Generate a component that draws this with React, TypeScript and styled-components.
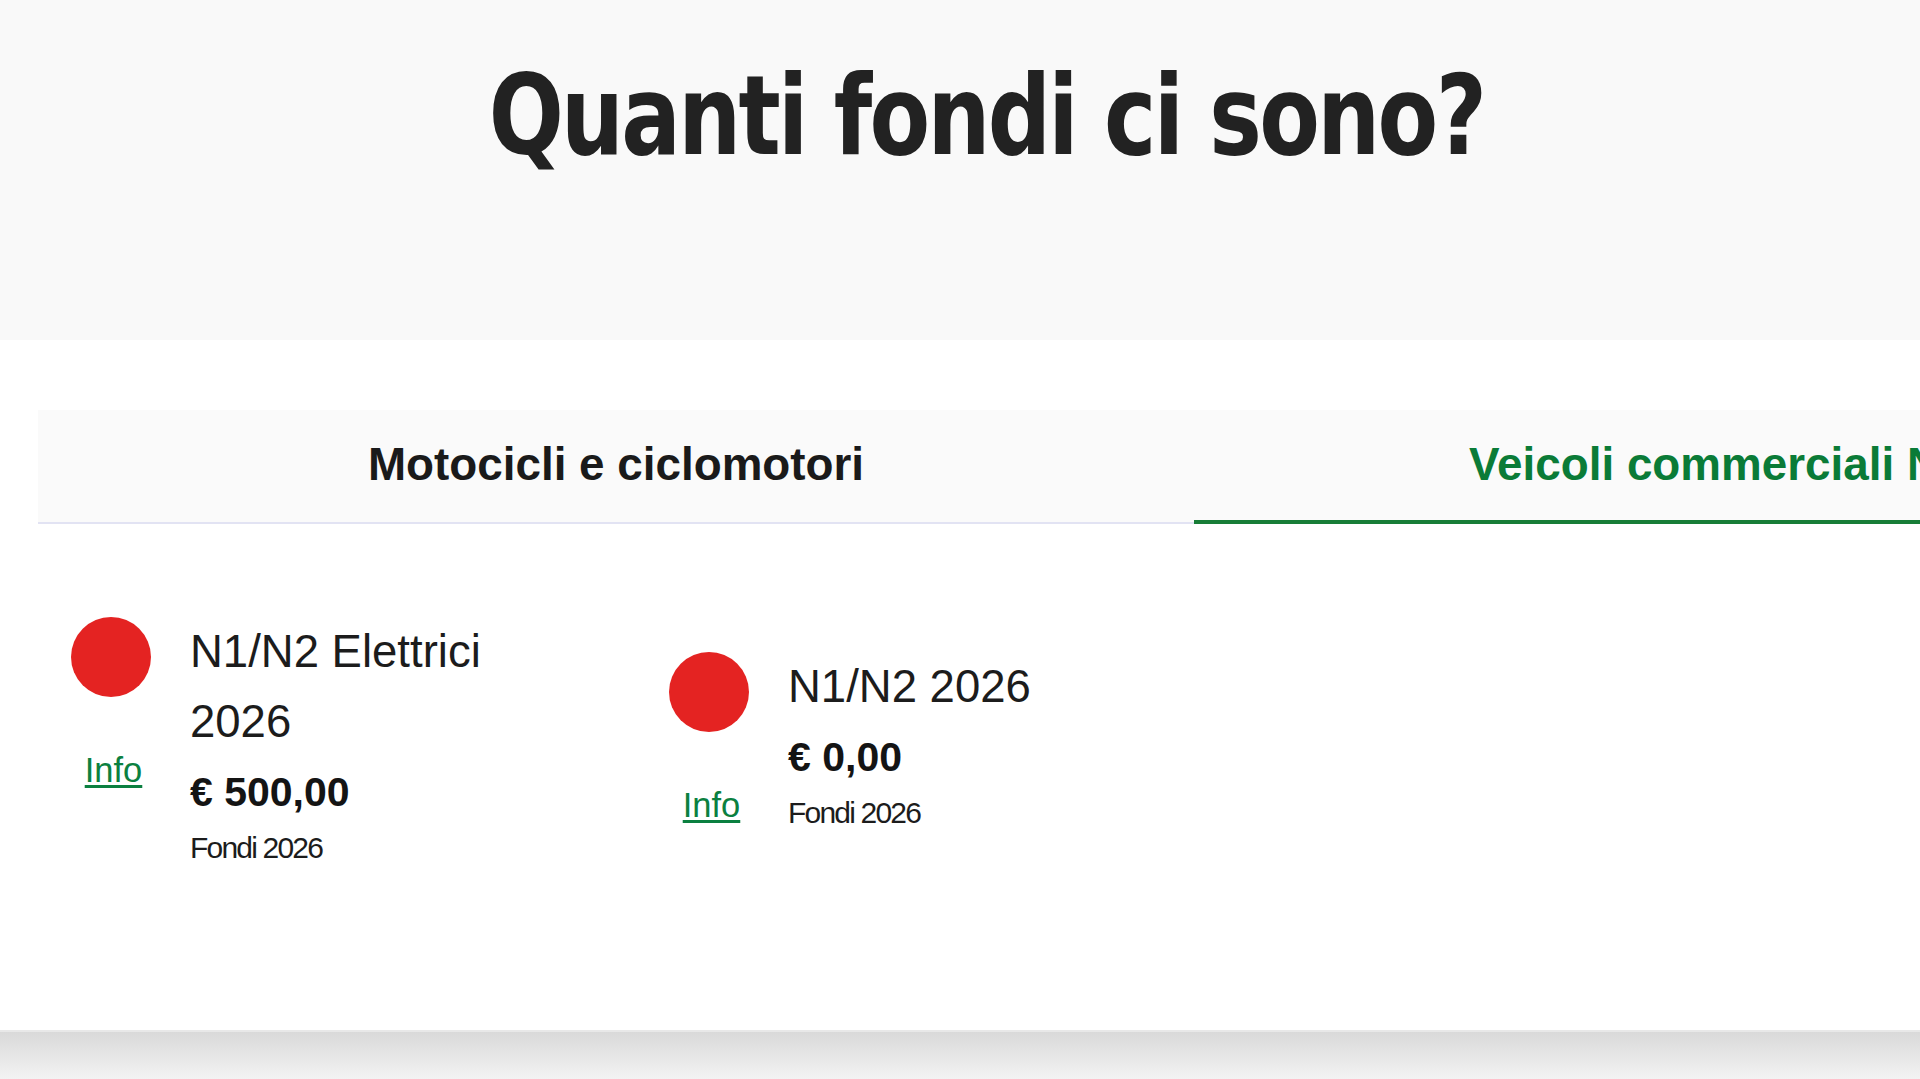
import styled, { createGlobalStyle } from "styled-components";

const GlobalStyle = createGlobalStyle`
    html, body {
        margin: 0;
        padding: 0;
        overflow-x: hidden;
        background-color: #f5f5f5;
        font-family: "Liberation Sans", Arial, sans-serif;
        color: #1c1c1c;
    }
`

const StyledHeader = styled.header`
    box-sizing: border-box;
    height: 340px;
    padding: 50px 0 0 52px;
    background-color: #f9f9f9;
    text-align: center;
`
const StyledTitle = styled.h1`
    margin: 0;
    font-family: "DejaVu Sans Condensed", "DejaVu Sans", sans-serif;
    font-weight: bold;
    font-size: 110px;
    line-height: 1.2;
    letter-spacing: -3px;
    color: #222222;

    span {
        display: inline-block;
        transform: scaleX(0.893);
    }
`
const StyledSection = styled.section`
    box-sizing: border-box;
    height: 690px;
    padding: 70px 0 0 38px;
    background-color: #ffffff;
    overflow: hidden;
`
const StyledFootShade = styled.div`
    height: 49px;
    border-top: 2px solid #e8e8e8;
    background: linear-gradient(#d9d9d9, #f4f4f4);
`
const StyledTabBar = styled.div`
    display: flex;
    height: 112px;
    background-color: #fafafa;
    border-bottom: 2px solid #e2e3f3;
`
const StyledTab = styled.div<{ $active?: boolean }>`
    box-sizing: border-box;
    flex: 0 0 1156px;
    height: 114px;
    margin-bottom: -2px;
    display: flex;
    align-items: center;
    justify-content: center;
    border-bottom: 4px solid ${(p) => (p.$active ? "#177d37" : "transparent")};
    font-size: 45.8px;
    font-weight: bold;
    white-space: nowrap;
    color: ${(p) => (p.$active ? "#0a7b37" : "#1a1a1a")};
    cursor: pointer;
`
const StyledFundRow = styled.div`
    display: flex;
    align-items: center;
    margin: 93px 0 0 33px;
`
const StyledFundItem = styled.div`
    flex: 0 0 598px;
    display: flex;
    align-items: flex-start;
    gap: 39px;
`
const StyledStatusColumn = styled.div`
    flex: 0 0 80px;
    display: flex;
    flex-direction: column;
    align-items: center;
`
const StyledDot = styled.span<{ $color: string }>`
    width: 80px;
    height: 80px;
    border-radius: 50%;
    background-color: ${(p) => p.$color};
`
const StyledInfoLink = styled.a`
    margin: 48px 0 0 5px;
    font-size: 34.5px;
    line-height: 50px;
    color: #0b8040;
    text-decoration: underline;
    text-underline-offset: 3px;
`
const StyledFundText = styled.div`
    width: 340px;
    display: flex;
    flex-direction: column;
`
const StyledFundName = styled.div`
    font-size: 45.5px;
    line-height: 70px;
    color: #1c1c1c;
`
const StyledAmount = styled.div`
    font-size: 41px;
    font-weight: bold;
    line-height: 70px;
    color: #141414;
`
const StyledFundNote = styled.div`
    font-size: 30px;
    line-height: 41px;
    letter-spacing: -1.8px;
    color: #1c1c1c;
`

const funds = [
    { name: "N1/N2 Elettrici 2026", amount: "€ 500,00", note: "Fondi 2026" },
    { name: "N1/N2 2026", amount: "€ 0,00", note: "Fondi 2026" },
];

export default function App() {
    return (
        <>
            <GlobalStyle />
            <StyledHeader>
                <StyledTitle>
                    <span>Quanti fondi ci sono?</span>
                </StyledTitle>
            </StyledHeader>
            <StyledSection>
                <StyledTabBar>
                    <StyledTab>Motocicli e ciclomotori</StyledTab>
                    <StyledTab $active>Veicoli commerciali N1 e N2</StyledTab>
                </StyledTabBar>
                <StyledFundRow>
                    {funds.map((fund) => (
                        <StyledFundItem key={fund.name}>
                            <StyledStatusColumn>
                                <StyledDot $color="#e42322" />
                                <StyledInfoLink href="#">Info</StyledInfoLink>
                            </StyledStatusColumn>
                            <StyledFundText>
                                <StyledFundName>{fund.name}</StyledFundName>
                                <StyledAmount>{fund.amount}</StyledAmount>
                                <StyledFundNote>{fund.note}</StyledFundNote>
                            </StyledFundText>
                        </StyledFundItem>
                    ))}
                </StyledFundRow>
            </StyledSection>
            <StyledFootShade />
        </>
    );
}
